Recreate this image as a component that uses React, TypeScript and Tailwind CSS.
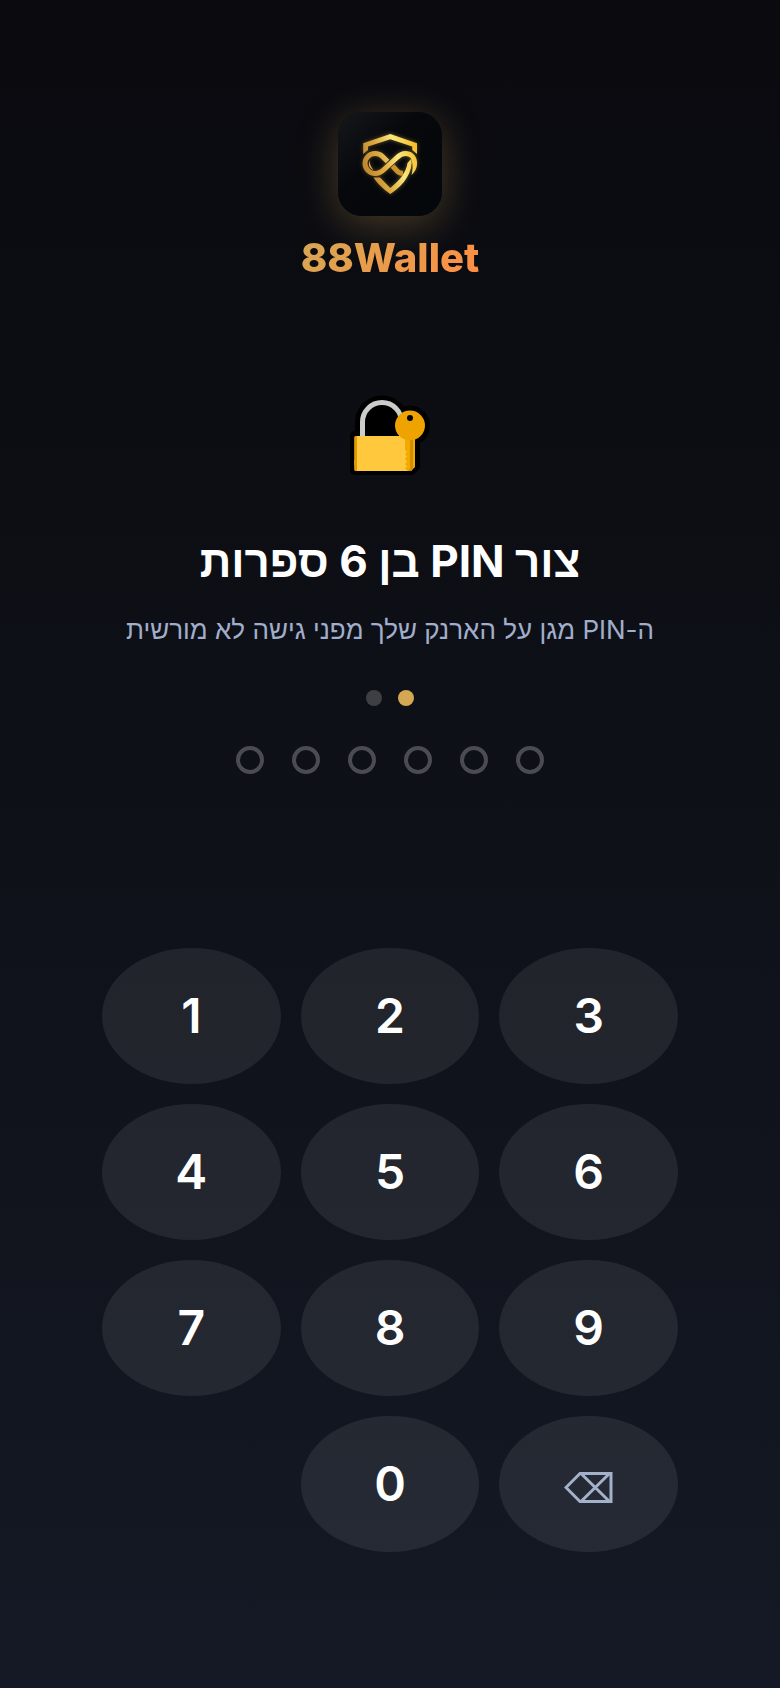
import { useState } from "react";

const PIN_LENGTH = 6;

function Logo() {
  return (
    <svg viewBox="0 0 104 104" className="size-[104px] rounded-3xl shadow-[0_8px_40px_rgba(212,168,83,0.3)]" aria-hidden="true">
      <defs>
        <linearGradient id="tile" x1="0" y1="0" x2="1" y2="1">
          <stop offset="0" stopColor="#15171a" />
          <stop offset="0.4" stopColor="#06080b" />
          <stop offset="1" stopColor="#04070b" />
        </linearGradient>
        <linearGradient id="gold" gradientUnits="userSpaceOnUse" x1="24" y1="58" x2="80" y2="40">
          <stop offset="0" stopColor="#b9812f" />
          <stop offset="0.35" stopColor="#dca93e" />
          <stop offset="0.65" stopColor="#fce77c" />
          <stop offset="1" stopColor="#f5bd28" />
        </linearGradient>
        <filter id="glow" x="-30%" y="-30%" width="160%" height="160%">
          <feGaussianBlur stdDeviation="2" result="b" />
          <feComponentTransfer in="b" result="soft">
            <feFuncA type="linear" slope="0.4" />
          </feComponentTransfer>
          <feMerge>
            <feMergeNode in="soft" />
            <feMergeNode in="SourceGraphic" />
          </feMerge>
        </filter>
      </defs>
      <rect width="104" height="104" fill="url(#tile)" />
      <g filter="url(#glow)">
        <path d="M52.300 22 25.200 31.300V42L30 38v-3.500L52.300 27.300 74.300 34.500V38l4.700 4V31.200z" fill="url(#gold)" />
        <path d="M35.500 65.500h6.500L52.300 76C62 68 68.500 60 69.500 51L73.500 46.500C75 60 67 72 52.300 82 44 76 39 71 35.500 65.500z" fill="url(#gold)" />
        <path d="M31.500 48.500c0 3.500 1.500 6.500 4 9.500-4-1.500-5.500-5-4-9.500z" fill="#e5b546" />
        <g fill="none" stroke="url(#gold)" strokeWidth="5">
          <path d="M49.500 49.500 44.500 44.500C42 42 39.500 41.500 37 41.500" />
          <path d="M54.500 54 59 58.800C60.500 60.500 62.500 61.300 65 61.300" stroke="#c9932f" />
          <path d="M37.500 41.500H37a10 10 0 0 0 0 20C41 61.500 43.500 60 46.500 57L59 45.500C62 42.500 64.500 41.500 67.500 41.500C72.500 41.500 76.500 45 76.500 50.500" />
        </g>
        <path d="M74 49.500 79 49.500C79.500 54 78 59 73.500 63 74.800 58 75 54 74 49.500z" fill="url(#gold)" />
      </g>
    </svg>
  );
}

function LockWithKey() {
  return (
    <svg viewBox="0 0 120 110" className="h-[110px] w-[120px]" aria-hidden="true">
      <path
        d="M30 56V42a22 22 0 0 1 43-6L85 60v26l-4 4H25V56z"
        fill="#000"
        stroke="#000"
        strokeWidth="10"
        strokeLinejoin="round"
      />
      <circle cx="80" cy="45.500" r="20" fill="#000" />
      <path d="M32.500 57V42a19.500 19.500 0 0 1 39 0v15" fill="none" stroke="#ccc" strokeWidth="5" />
      <rect x="24.500" y="56" width="60.500" height="30" rx="1.500" fill="#ffc83d" />
      <path d="M24.500 80H82l-2 11H26q-1.500 0-1.500-1.500z" fill="#ffc83d" />
      <path d="M27 56v35h-1q-1.500 0-1.500-1.500v-32Q24.500 56 26 56z" fill="#e19b00" />
      <path d="M75 58h10v29l-4 4h-3l-3-2.500 2-2-2-2.500 2-2.500-2-2.500 2-2.500-2-2.500 2-2-2-2z" fill="#f2a900" />
      <path d="M80 58h3v31l-2 2h-3l2-2z" fill="#d48c00" />
      <circle cx="80" cy="45.500" r="15" fill="#eea300" />
      <circle cx="80" cy="38" r="3" fill="#000" />
    </svg>
  );
}

function BackspaceIcon() {
  return (
    <svg viewBox="0 0 49 31" className="h-[31px] w-[49px]" fill="none" stroke="currentColor" strokeWidth="3" aria-hidden="true">
      <path d="M47 1.500V29.500H16L2 15.500 16 1.500z" />
      <path d="M17 1.500 45.500 29.500M45.500 1.500 17 29.500" />
    </svg>
  );
}

const keyClass =
  "flex h-[136px] items-center justify-center rounded-[50%] bg-white/8 text-5xl font-semibold text-white active:bg-white/15";

export default function App() {
  const [pin, setPin] = useState("");
  const press = (digit: string) => setPin((p) => (p.length < PIN_LENGTH ? p + digit : p));

  return (
    <main
      dir="rtl"
      lang="he"
      className="flex min-h-screen flex-col items-center bg-linear-to-b from-[#0a0a0f] via-[#0e1118] to-[#151925] pt-28 pb-[136px] font-['Inter','Noto_Sans',sans-serif]"
    >
      <header className="flex flex-col items-center gap-4">
        <Logo />
        <span dir="ltr" className="bg-linear-135 from-[#d4a853] to-[#ff8c42] bg-clip-text text-[40px] leading-[52px] font-extrabold text-transparent">
          88Wallet
        </span>
      </header>

      <section className="mt-24 flex flex-col items-center">
        <LockWithKey />
        <h1 className="mt-10 text-center text-[44px] leading-[62px] font-bold text-white">צור PIN בן 6 ספרות</h1>
        <p className="mt-[18px] text-center text-[26px] leading-10 text-[#a0aecb]">ה-PIN מגן על הארנק שלך מפני גישה לא מורשית</p>
        <div className="mt-10 flex gap-4">
          <span className="size-4 rounded-full bg-[#d4a853]" />
          <span className="size-4 rounded-full bg-white/20" />
        </div>
        <div className="mt-10 flex gap-7" role="status" aria-label="PIN">
          {Array.from({ length: PIN_LENGTH }, (_, i) => (
            <span
              key={i}
              className={
                i < pin.length
                  ? "size-7 rounded-full border-4 border-[#d4a853] bg-[#d4a853]"
                  : "size-7 rounded-full border-4 border-white/25"
              }
            />
          ))}
        </div>
      </section>

      <div dir="ltr" className="mt-auto grid w-full max-w-[576px] grid-cols-3 gap-5">
        {["1", "2", "3", "4", "5", "6", "7", "8", "9"].map((d) => (
          <button key={d} type="button" className={keyClass} onClick={() => press(d)}>
            {d}
          </button>
        ))}
        <button type="button" className={`${keyClass} col-start-2`} onClick={() => press("0")}>
          0
        </button>
        <button
          type="button"
          aria-label="מחק"
          className="flex h-[136px] items-center justify-center rounded-[50%] bg-white/8 pt-1.5 text-[#a3b1cb] active:bg-white/15"
          onClick={() => setPin((p) => p.slice(0, -1))}
        >
          <BackspaceIcon />
        </button>
      </div>
    </main>
  );
}
